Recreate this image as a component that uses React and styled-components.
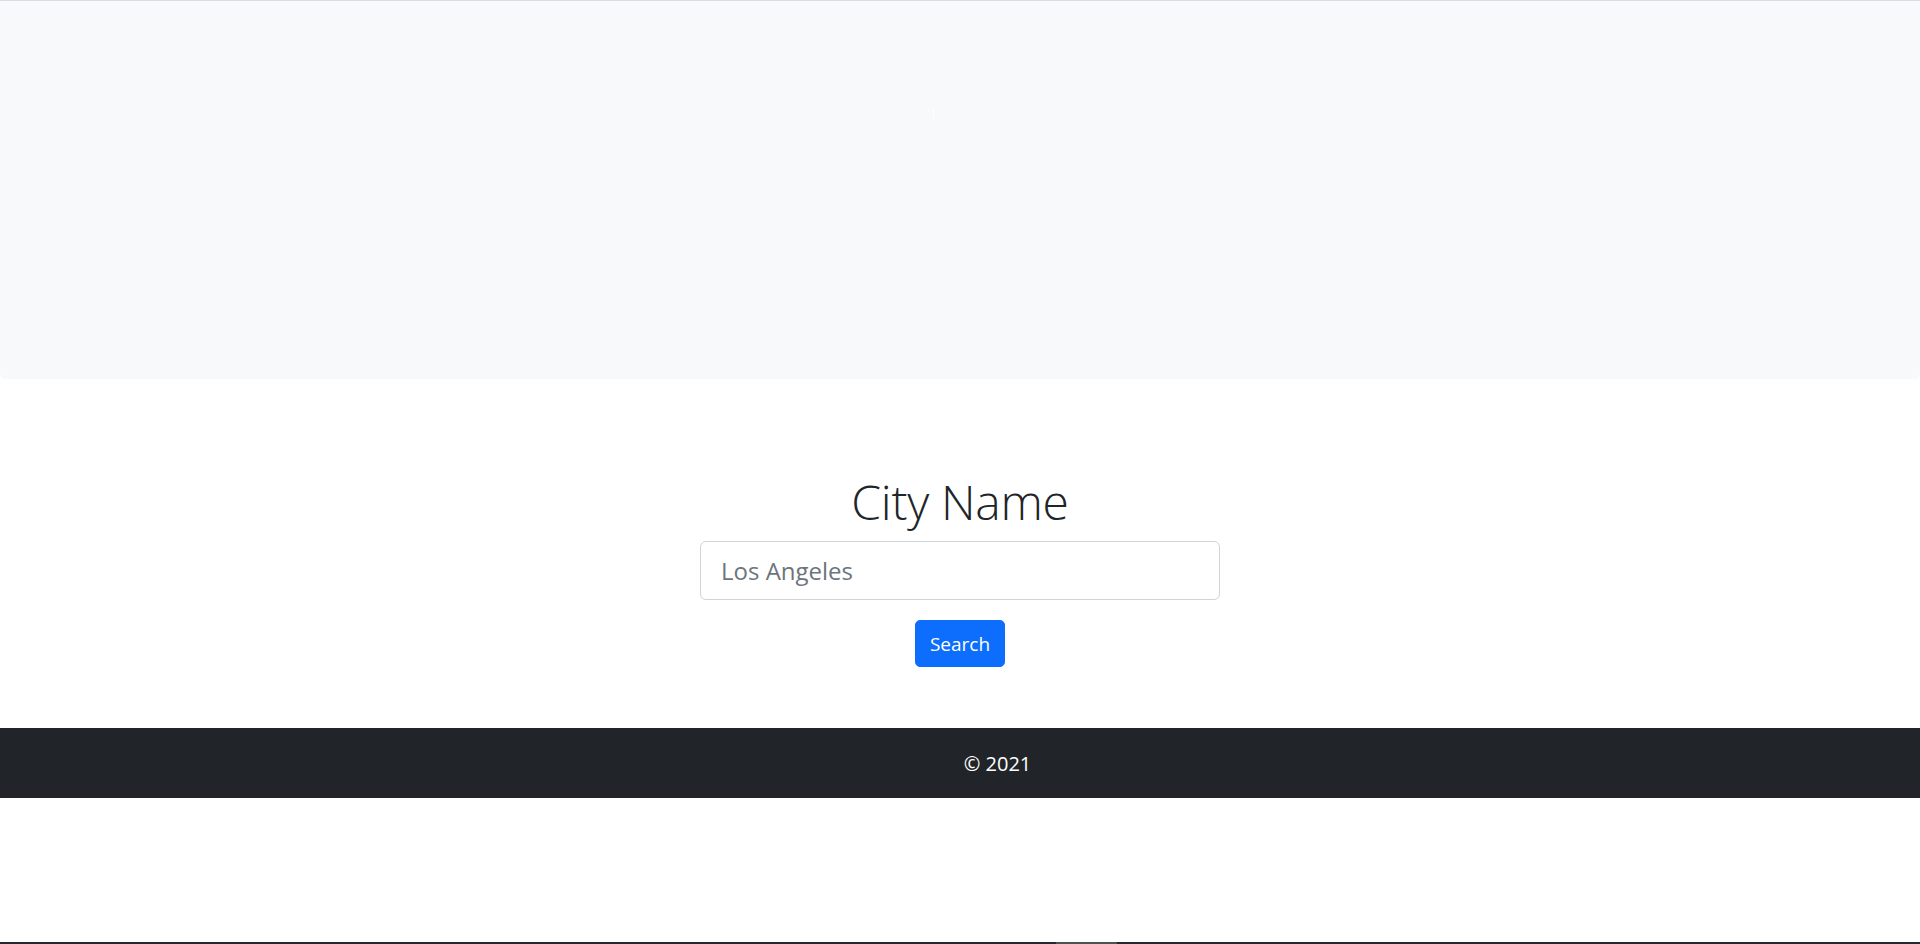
import React from "react";
import styled, { createGlobalStyle } from "styled-components";

const GlobalStyle = createGlobalStyle`
  html, body {
    margin: 0;
    padding: 0;
    background: #ffffff;
  }
  body {
    font-family: "Open Sans", "Noto Sans", "Liberation Sans", sans-serif;
    color: #212529;
    -webkit-font-smoothing: antialiased;
  }
  *, *::before, *::after { box-sizing: border-box; }
`;

const Page = styled.div`
  min-height: 100vh;
  display: flex;
  flex-direction: column;
`;

const TopRule = styled.div`
  height: 1px;
  background: #d9dce0;
`;

const Hero = styled.header`
  height: 378px;
  background: #f8f9fa;
  border-radius: 0 0 6px 6px;
  display: flex;
  flex-direction: column;
`;

const Caret = styled.span`
  display: block;
  width: 1px;
  height: 9px;
  margin: 108px 0 0 933px;
  background: #ffffff;
`;

const Main = styled.main`
  display: flex;
  flex-direction: column;
  align-items: center;
  padding: 93px 0 61px;
`;

const Title = styled.h1`
  margin: 0 0 9px;
  font-size: 48px;
  line-height: 60px;
  font-weight: 300;
  color: #212529;
  letter-spacing: -0.3px;
`;

const SearchForm = styled.form`
  display: flex;
  flex-direction: column;
  align-items: center;
  gap: 20px;
`;

const CityInput = styled.input`
  width: 520px;
  height: 59px;
  padding: 0 20px;
  border: 1px solid #ced4da;
  border-radius: 6px;
  background: #ffffff;
  font-family: inherit;
  font-size: 24px;
  color: #212529;
  outline: none;
  &::placeholder {
    color: #6c757d;
    opacity: 1;
  }
`;

const SearchButton = styled.button`
  height: 47px;
  padding: 0 14px;
  border: 1px solid #0d6efd;
  border-radius: 5px;
  background: #0d6efd;
  color: #ffffff;
  font-family: inherit;
  font-size: 19px;
  cursor: pointer;
`;

const Footer = styled.footer`
  height: 70px;
  padding-left: 75px;
  background: #212529;
  color: #ffffff;
  display: flex;
  align-items: center;
  justify-content: center;
  font-size: 20px;
`;

const Spacer = styled.div`
  flex: 1;
`;

const Taskbar = styled.div`
  height: 2px;
  display: flex;
`;

const TaskSegment = styled.div`
  height: 100%;
  flex: ${(p) => (p.$width ? `0 0 ${p.$width}px` : "1")};
  background: ${(p) => p.$color};
`;

export default function App() {
  return (
    <>
      <GlobalStyle />
      <Page>
        <TopRule />
        <Hero>
          <Caret />
        </Hero>
        <Main>
          <Title>City Name</Title>
          <SearchForm onSubmit={(e) => e.preventDefault()}>
            <CityInput type="text" placeholder="Los Angeles" />
            <SearchButton type="submit">Search</SearchButton>
          </SearchForm>
        </Main>
        <Footer>© 2021</Footer>
        <Spacer />
        <Taskbar>
          <TaskSegment $width={1056} $color="#212a2f" />
          <TaskSegment $width={61} $color="#4a5553" />
          <TaskSegment $color="#212a2f" />
        </Taskbar>
      </Page>
    </>
  );
}
